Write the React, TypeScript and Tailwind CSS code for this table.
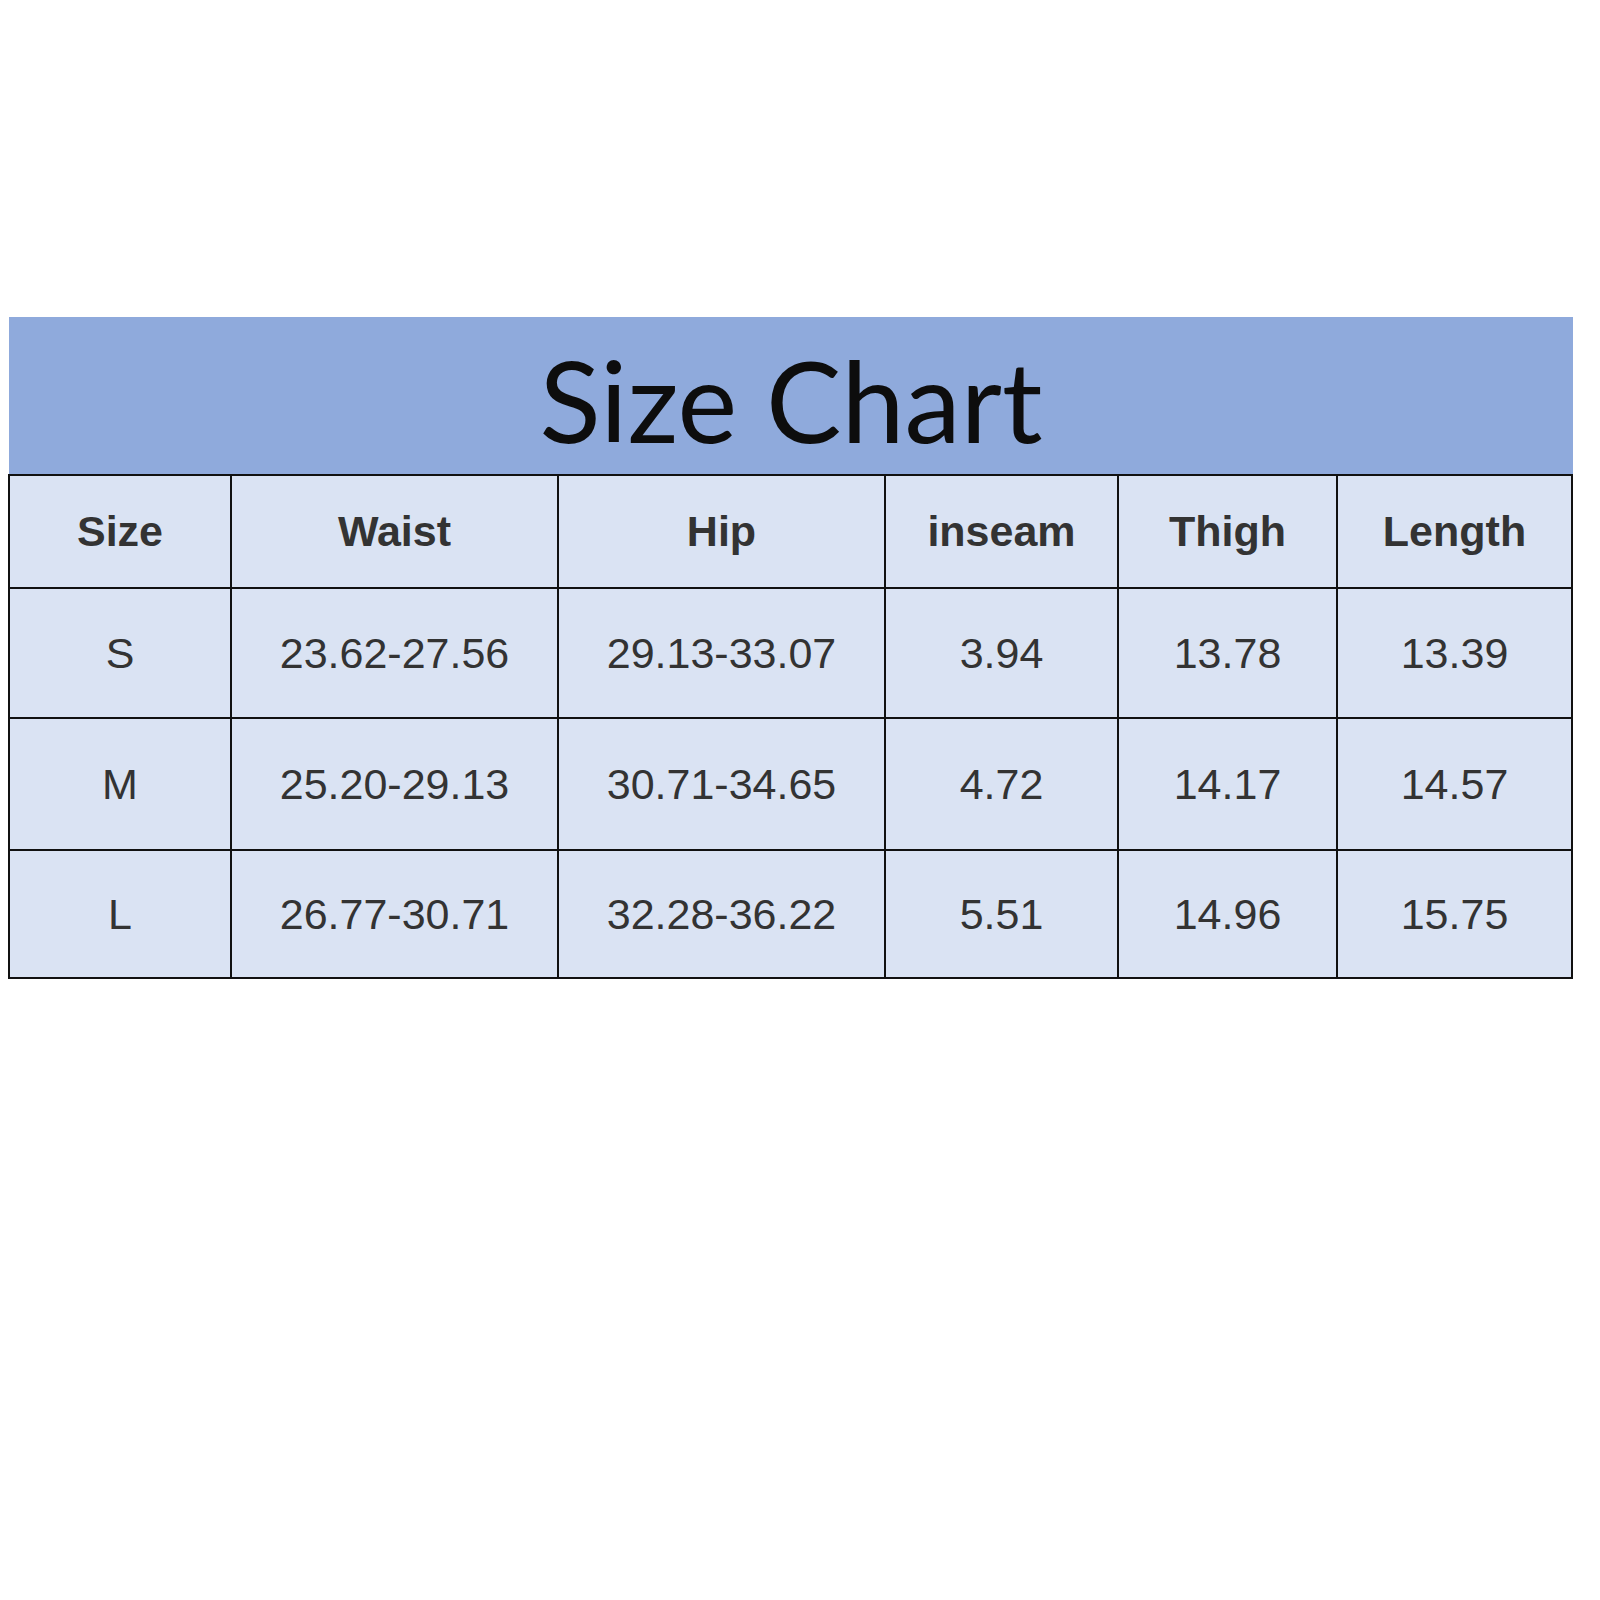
import React from 'react'

const headers = ['Size', 'Waist', 'Hip', 'inseam', 'Thigh', 'Length']

const rows = [
    { h: 'h-[128px]', cells: ['S', '23.62-27.56', '29.13-33.07', '3.94', '13.78', '13.39'] },
    { h: 'h-[130px]', cells: ['M', '25.20-29.13', '30.71-34.65', '4.72', '14.17', '14.57'] },
    { h: 'h-[126px]', cells: ['L', '26.77-30.71', '32.28-36.22', '5.51', '14.96', '15.75'] },
]

const App = () => {
    return (
        <div className="w-[1600px] h-[1600px] bg-white pt-[317px] pl-[8px]">
            <div className="ml-[1px] w-[1564px] h-[157px] bg-[#8faadc] flex items-center justify-center">
                <h1 className="font-['Lato','Open_Sans',sans-serif] text-[113px] leading-none text-[#0d0d0d] pt-[8px]">
                    Size Chart
                </h1>
            </div>
            <div className="w-[1565px] bg-[#111] p-[2px] grid grid-cols-[220px_325px_325px_231px_217px_233px] gap-[2px] font-['Liberation_Sans',Arial,sans-serif] text-[#333]">
                {headers.map((h) => (
                    <div key={h} className="h-[111px] bg-[#dae3f3] flex items-center justify-center text-[43px] font-bold">
                        {h}
                    </div>
                ))}
                {rows.map((r) =>
                    r.cells.map((c, i) => (
                        <div key={r.cells[0] + i} className={`${r.h} bg-[#dae3f3] flex items-center justify-center text-[43px]`}>
                            {c}
                        </div>
                    ))
                )}
            </div>
        </div>
    )
}

export default App
